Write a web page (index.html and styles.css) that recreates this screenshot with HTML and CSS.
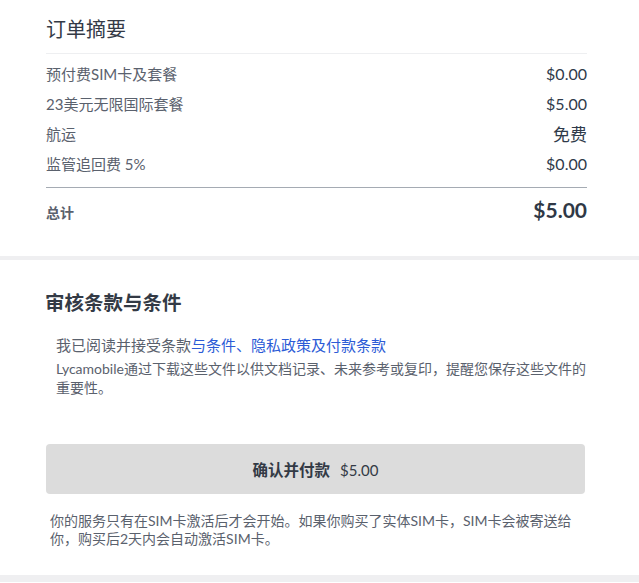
FILE: index.html
```html
<!DOCTYPE html>
<html lang="zh-CN">
<head>
<meta charset="utf-8">
<title>订单摘要</title>
<link rel="stylesheet" href="styles.css">
</head>
<body>
<section class="summary">
  <h2 class="summary-title">订单摘要</h2>
  <div class="rows">
    <div class="row"><span class="label">预付费SIM卡及套餐</span><span class="value">$0.00</span></div>
    <div class="row"><span class="label">23美元无限国际套餐</span><span class="value">$5.00</span></div>
    <div class="row"><span class="label">航运</span><span class="value value-cjk">免费</span></div>
    <div class="row"><span class="label">监管追回费 5%</span><span class="value">$0.00</span></div>
  </div>
  <div class="row total"><span class="total-label">总计</span><span class="total-value">$5.00</span></div>
</section>
<div class="band"></div>
<section class="terms">
  <h2 class="terms-title">审核条款与条件</h2>
  <p class="accept">我已阅读并接受条款<a class="link" href="#">与条件、隐私政策及付款条款</a></p>
  <p class="note">Lycamobile通过下载这些文件以供文档记录、未来参考或复印，提醒您保存这些文件的重要性。</p>
  <button class="pay" type="button">确认并付款<span class="pay-amount">$5.00</span></button>
  <p class="footnote">你的服务只有在SIM卡激活后才会开始。如果你购买了实体SIM卡，SIM卡会被寄送给你，购买后2天内会自动激活SIM卡。</p>
</section>
<div class="band band-bottom"></div>
</body>
</html>
```
FILE: styles.css
```css
html, body {
  margin: 0;
  padding: 0;
  background: #ffffff;
  font-family: Lato, "Noto Sans CJK SC", sans-serif;
  color: #333a45;
}

.summary {
  padding: 14px 52px 29px 46px;
}

.summary-title {
  margin: 0;
  font-size: 20px;
  line-height: 30px;
  font-weight: 400;
  color: #343a46;
  padding-bottom: 9px;
  border-bottom: 1px solid #eeeff1;
}

.rows {
  padding-top: 4px;
  padding-bottom: 9px;
  border-bottom: 1px solid #a5abb3;
}

.row {
  display: flex;
  justify-content: space-between;
  align-items: center;
  height: 30px;
}

.label {
  font-size: 15px;
  color: #5a616d;
}

.value {
  font-size: 16px;
  color: #2f3a4a;
}

.value-cjk {
  font-size: 17px;
}

.total {
  margin-top: 9px;
}

.total-label {
  font-size: 14px;
  font-weight: 700;
  color: #5a616d;
}

.total-value {
  font-size: 21px;
  font-weight: 700;
  color: #2f3846;
  position: relative;
  top: -3px;
}

.band {
  height: 4px;
  background: #efeff1;
}

.band-bottom {
  height: 7px;
}

.terms {
  padding: 30px 46px 27px 45px;
}

.terms-title {
  margin: 0;
  font-size: 19.5px;
  line-height: 26px;
  font-weight: 700;
  color: #333a45;
}

.accept {
  margin: 18px 0 0 11px;
  font-size: 15px;
  line-height: 22px;
  color: #5a616d;
}

.link {
  color: #2c5bd6;
  text-decoration: none;
}

.note {
  margin: 3px 0 0 11px;
  font-size: 14px;
  line-height: 19px;
  color: #5a616d;
}

.pay {
  display: block;
  width: 539px;
  height: 50px;
  margin: 47px 0 0 1px;
  border: none;
  border-radius: 4px;
  background: #dcdcdc;
  font-family: Lato, "Noto Sans CJK SC", sans-serif;
  font-size: 15.5px;
  font-weight: 700;
  color: #333a45;
  cursor: pointer;
}

.pay-amount {
  margin-left: 10px;
  font-size: 15px;
  font-weight: 400;
}

.footnote {
  margin: 18px 0 0 5px;
  width: 535px;
  font-size: 14px;
  line-height: 18px;
  color: #5a616d;
}
```
